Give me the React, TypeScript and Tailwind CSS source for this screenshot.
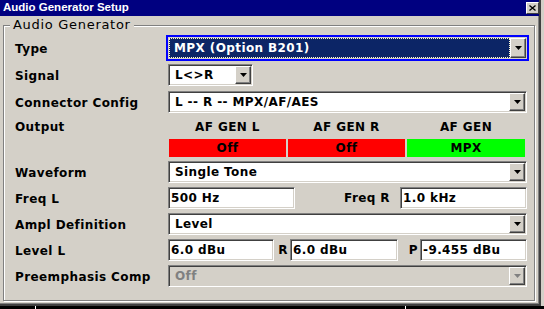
import React from "react";

const label = "font-['DejaVu_Sans',sans-serif] font-bold text-[12px] tracking-[0.4px] text-black";

function Arrow({ disabled }: { disabled?: boolean }) {
  return (
    <div className="w-[16px] h-full shrink-0 flex items-center justify-center bg-[#d4d0c8] border border-t-white border-l-white border-b-[#404040] border-r-[#404040] shadow-[inset_-1px_-1px_0_#808080]">
      <svg width="7" height="4" viewBox="0 0 7 4">
        <path d="M0 0h7L3.5 4z" fill={disabled ? "#808080" : "#000"} />
      </svg>
    </div>
  );
}

function Select({ value, width, disabled }: { value: string; width: string; disabled?: boolean }) {
  return (
    <div
      className={`${width} h-[22px] flex items-stretch p-[1px] border border-t-[#808080] border-l-[#808080] border-b-white border-r-white shadow-[inset_1px_1px_0_#404040,inset_-1px_-1px_0_#d4d0c8] ${
        disabled ? "bg-[#d4d0c8]" : "bg-white"
      }`}
    >
      <div className={`flex-1 flex items-center pl-[5px] ${label} ${disabled ? "!text-[#808080]" : ""}`}>{value}</div>
      <Arrow disabled={disabled} />
    </div>
  );
}

function Field({ value, width }: { value: string; width: string }) {
  return (
    <div
      className={`${width} h-[22px] flex items-center pl-[2px] bg-white border border-t-[#808080] border-l-[#808080] border-b-white border-r-white shadow-[inset_1px_1px_0_#404040,inset_-1px_-1px_0_#d4d0c8] ${label}`}
    >
      {value}
    </div>
  );
}

function Row({ name, children }: { name: string; children: React.ReactNode }) {
  return (
    <div className="h-[26px] flex items-center">
      <div className={`w-[153px] shrink-0 pt-[1px] ${label}`}>{name}</div>
      {children}
    </div>
  );
}

export default function App() {
  return (
    <div className="w-[544px] h-[309px] bg-[#d4d0c8] overflow-hidden flex flex-col">
      <div className="w-[541px] h-[306px] flex flex-col border-r-2 border-b-2 border-r-[#404040] border-b-[#404040] shadow-[inset_-1px_-1px_0_#808080]">
        {/* title bar */}
        <div className="h-[16px] bg-[#000080] flex items-center justify-between pl-[3px] pr-[0px]">
          <span className="font-['Liberation_Sans',sans-serif] font-bold text-[11.5px] text-white leading-none">
            Audio Generator Setup
          </span>
          <div className="w-[13px] h-[12px] bg-[#d4d0c8] border border-t-white border-l-white border-b-[#404040] border-r-[#404040] flex items-center justify-center">
            <svg width="7" height="6" viewBox="0 0 7 6">
              <path d="M0.5 0.5l6 5M6.5 0.5l-6 5" stroke="#000" strokeWidth="1.3" />
            </svg>
          </div>
        </div>

        {/* group box */}
        <div className="relative mt-[9px] ml-[3px] w-[532px] h-[276px] border border-[#808080] shadow-[inset_1px_1px_0_#fff,1px_1px_0_#fff] pt-[9px] pl-[11px]">
          <div className="absolute left-[6px] top-[-9px] px-[3px] bg-[#d4d0c8] font-['DejaVu_Sans',sans-serif] text-[13px] leading-[16px] tracking-[0.7px] text-black">
            Audio Generator
          </div>

          <div className="flex flex-col gap-[1px]">
            <Row name="Type">
              <div className="-ml-[2px] w-[363px] h-[26px] border-2 border-[#0000ff] flex items-stretch p-[1px] bg-[#d4d0c8]">
                <div className="flex-1 flex items-center pl-[4px] bg-[#0c2566] border border-dotted border-[#fff8d0] font-['DejaVu_Sans',sans-serif] font-bold text-[12px] tracking-[0.4px] text-white">
                  MPX (Option B201)
                </div>
                <Arrow />
              </div>
            </Row>
            <Row name="Signal">
              <Select value="L<>R" width="w-[85px]" />
            </Row>
            <Row name="Connector Config">
              <Select value="L -- R -- MPX/AF/AES" width="w-[359px]" />
            </Row>
          </div>

          <div className="h-[22px] mt-[1px] flex items-center">
            <div className={`w-[154px] shrink-0 ${label}`}>Output</div>
            <div className="flex gap-[2px]">
              <div className={`w-[117px] text-center ${label}`}>AF GEN L</div>
              <div className={`w-[117px] text-center ${label}`}>AF GEN R</div>
              <div className={`w-[118px] text-center ${label}`}>AF GEN</div>
            </div>
          </div>
          <div className="h-[18px] mt-[1px] ml-[154px] flex gap-[2px]">
            <div className={`w-[117px] bg-[#ff0000] flex items-center justify-center ${label}`}>Off</div>
            <div className={`w-[117px] bg-[#ff0000] flex items-center justify-center ${label}`}>Off</div>
            <div className={`w-[118px] bg-[#00ff00] flex items-center justify-center ${label}`}>MPX</div>
          </div>

          <div className="mt-[2px] flex flex-col">
            <Row name="Waveform">
              <Select value="Single Tone" width="w-[359px]" />
            </Row>
            <Row name="Freq L">
              <div className="w-[359px] flex items-center">
                <Field value="500 Hz" width="w-[127px]" />
                <div className={`flex-1 text-right pr-[10px] ${label}`}>Freq R</div>
                <Field value="1.0 kHz" width="w-[127px]" />
              </div>
            </Row>
            <Row name="Ampl Definition">
              <Select value="Level" width="w-[359px]" />
            </Row>
            <Row name="Level L">
              <div className="w-[359px] flex items-center">
                <Field value="6.0 dBu" width="w-[106px]" />
                <div className={`w-[16px] text-right pr-[2px] ${label}`}>R</div>
                <Field value="6.0 dBu" width="w-[108px]" />
                <div className={`flex-1 text-right pr-[2px] ${label}`}>P</div>
                <Field value="-9.455 dBu" width="w-[107px]" />
              </div>
            </Row>
            <Row name="Preemphasis Comp">
              <Select value="Off" width="w-[359px]" disabled />
            </Row>
          </div>
        </div>
      </div>
      <div className="h-[3px] bg-black flex">
        <div className="w-[35px]" />
        <div className="w-[370px] border-l border-white" />
        <div className="w-[80px] border-l border-white" />
      </div>
    </div>
  );
}
